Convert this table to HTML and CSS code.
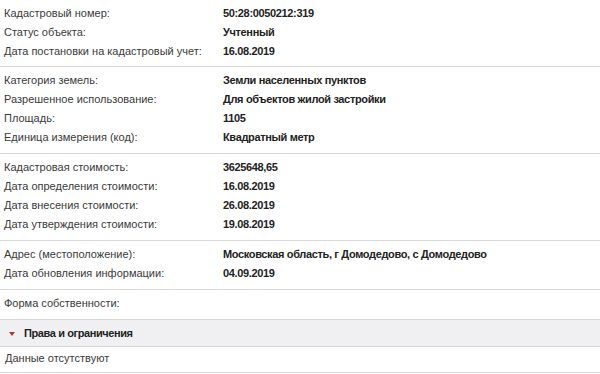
FILE: index.html
```html
<!DOCTYPE html>
<html lang="ru">
<head>
<meta charset="utf-8">
<link rel="stylesheet" href="styles.css">
</head>
<body>
<div class="page">
  <div class="group first">
    <div class="label">Кадастровый номер:</div><div class="value">50:28:0050212:319</div>
    <div class="label">Статус объекта:</div><div class="value">Учтенный</div>
    <div class="label">Дата постановки на кадастровый учет:</div><div class="value">16.08.2019</div>
  </div>
  <div class="group">
    <div class="label">Категория земель:</div><div class="value">Земли населенных пунктов</div>
    <div class="label">Разрешенное использование:</div><div class="value">Для объектов жилой застройки</div>
    <div class="label">Площадь:</div><div class="value">1105</div>
    <div class="label">Единица измерения (код):</div><div class="value">Квадратный метр</div>
  </div>
  <div class="group">
    <div class="label">Кадастровая стоимость:</div><div class="value">3625648,65</div>
    <div class="label">Дата определения стоимости:</div><div class="value">16.08.2019</div>
    <div class="label">Дата внесения стоимости:</div><div class="value">26.08.2019</div>
    <div class="label">Дата утверждения стоимости:</div><div class="value">19.08.2019</div>
  </div>
  <div class="group">
    <div class="label">Адрес (местоположение):</div><div class="value">Московская область, г Домодедово, с Домодедово</div>
    <div class="label">Дата обновления информации:</div><div class="value">04.09.2019</div>
  </div>
  <div class="group">
    <div class="label">Форма собственности:</div><div class="value"></div>
  </div>
  <div class="section-head"><span class="arrow"></span><span class="title">Права и ограничения</span></div>
  <div class="empty">Данные отсутствуют</div>
</div>
</body>
</html>
```
FILE: styles.css
```css
html, body {
  margin: 0;
  padding: 0;
  background: #ffffff;
}
.page {
  width: 600px;
  font-family: "Liberation Sans", Arial, sans-serif;
  font-size: 11px;
  color: #333333;
}
.group {
  display: grid;
  grid-template-columns: 219px 1fr;
  grid-auto-rows: 19px;
  align-items: center;
  padding: 3px 0 7px 4px;
  border-top: 1px solid #d9d9d9;
}
.group.first {
  border-top: none;
  padding-top: 3px;
  padding-bottom: 6px;
}
.label {
  color: #3a3a3a;
  white-space: nowrap;
}
.value {
  font-weight: bold;
  color: #222222;
  white-space: nowrap;
  letter-spacing: -0.35px;
}
.section-head {
  display: flex;
  align-items: center;
  height: 26px;
  background: #f0f0f2;
  border-top: 1px solid #d6d6d8;
  border-bottom: 1px solid #d6d6d8;
  padding-left: 9px;
}
.arrow {
  width: 0;
  height: 0;
  border-left: 3.5px solid transparent;
  border-right: 3.5px solid transparent;
  border-top: 4px solid #a33a3a;
  margin-right: 9px;
  margin-top: 1px;
}
.title {
  font-weight: bold;
  color: #222222;
  letter-spacing: -0.4px;
}
.empty {
  height: 25px;
  line-height: 22px;
  padding-left: 5px;
  border-bottom: 1px solid #d6d6d8;
  color: #3a3a3a;
}
```
